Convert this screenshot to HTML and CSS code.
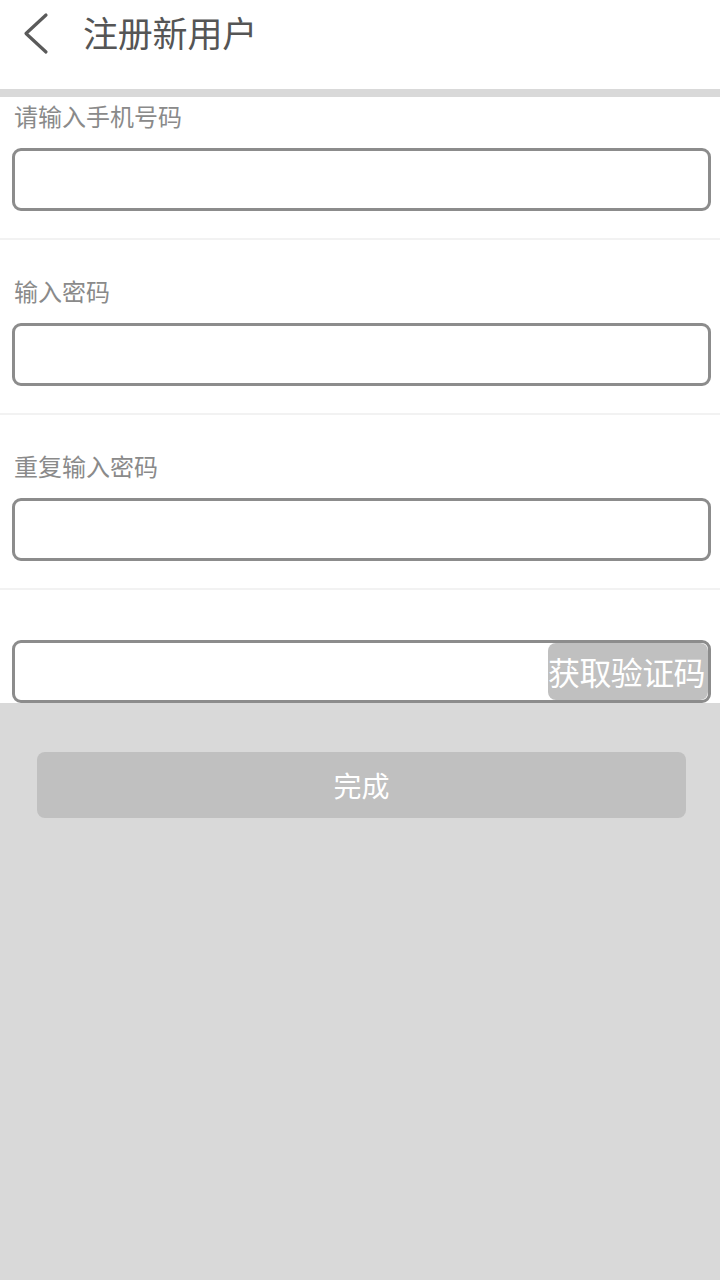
FILE: index.html
```html
<!DOCTYPE html>
<html lang="zh-CN">
<head>
<meta charset="utf-8">
<title>注册新用户</title>
<link rel="stylesheet" href="styles.css">
</head>
<body>
<div class="page">
  <header class="topbar">
    <svg class="back" width="30" height="44" viewBox="0 0 30 44" aria-hidden="true">
      <polyline points="23,3 3,21.5 23,40" fill="none" stroke="#5a5a5a" stroke-width="3.2" stroke-linecap="round" stroke-linejoin="round"/>
    </svg>
    <h1 class="title">注册新用户</h1>
  </header>
  <div class="shadowbar"></div>
  <section class="field first">
    <div class="label">请输入手机号码</div>
    <input class="box" type="tel">
  </section>
  <section class="field">
    <div class="label">输入密码</div>
    <input class="box" type="password">
  </section>
  <section class="field">
    <div class="label">重复输入密码</div>
    <input class="box" type="password">
  </section>
  <section class="field code">
    <div class="box codebox">
      <input class="codeinput" type="text">
      <button class="getcode" type="button">获取验证码</button>
    </div>
  </section>
  <div class="bottom">
    <button class="done" type="button">完成</button>
  </div>
</div>
</body>
</html>
```

FILE: styles.css
```css
html, body {
  margin: 0;
  padding: 0;
  height: 100%;
}
body {
  font-family: "Noto Sans CJK SC", "Noto Sans", sans-serif;
  background: #ffffff;
}
.page {
  display: flex;
  flex-direction: column;
  min-height: 100%;
}
.topbar {
  height: 89px;
  display: flex;
  align-items: flex-start;
  box-sizing: border-box;
  padding-top: 11px;
  background: #fff;
}
.back {
  margin-left: 23px;
  margin-top: 1px;
  flex: none;
}
.title {
  margin: -1px 0 0 30px;
  font-size: 35px;
  font-weight: normal;
  line-height: 44px;
  color: #555555;
  letter-spacing: -0.2px;
}
.shadowbar {
  height: 8px;
  background: #d9d9d9;
}
.field {
  display: flex;
  flex-direction: column;
  padding: 36px 9px 27px 12px;
  border-bottom: 2px solid #f2f2f2;
}
.field.first {
  padding-top: 4px;
}
.field.code {
  padding-top: 50px;
  padding-bottom: 0;
  border-bottom: none;
}
.label {
  height: 30px;
  line-height: 30px;
  font-size: 24px;
  color: #8a8a8a;
  padding-left: 2px;
  margin-bottom: 17px;
}
.box {
  box-sizing: border-box;
  height: 63px;
  width: 100%;
  margin: 0;
  border: 3px solid #8c8c8c;
  border-radius: 9px;
  background: #fff;
  outline: none;
  font-size: 24px;
  font-family: inherit;
}
.codebox {
  display: flex;
  overflow: hidden;
  padding: 0;
}
.codeinput {
  flex: 1;
  min-width: 0;
  border: none;
  outline: none;
  background: transparent;
  font-size: 24px;
  font-family: inherit;
}
.getcode {
  flex: none;
  width: 160px;
  border: none;
  border-radius: 8px;
  background: #c0c0c0;
  color: #ffffff;
  font-size: 32px;
  font-family: inherit;
  padding: 0 0 2px 0;
  white-space: nowrap;
  letter-spacing: -0.6px;
  text-align: left;
}
.bottom {
  flex: 1;
  background: #d9d9d9;
  padding: 49px 34px 0 37px;
}
.done {
  display: block;
  width: 100%;
  height: 66px;
  border: none;
  border-radius: 8px;
  background: #c0c0c0;
  color: #ffffff;
  font-size: 28px;
  font-family: inherit;
  padding: 0;
}
```
